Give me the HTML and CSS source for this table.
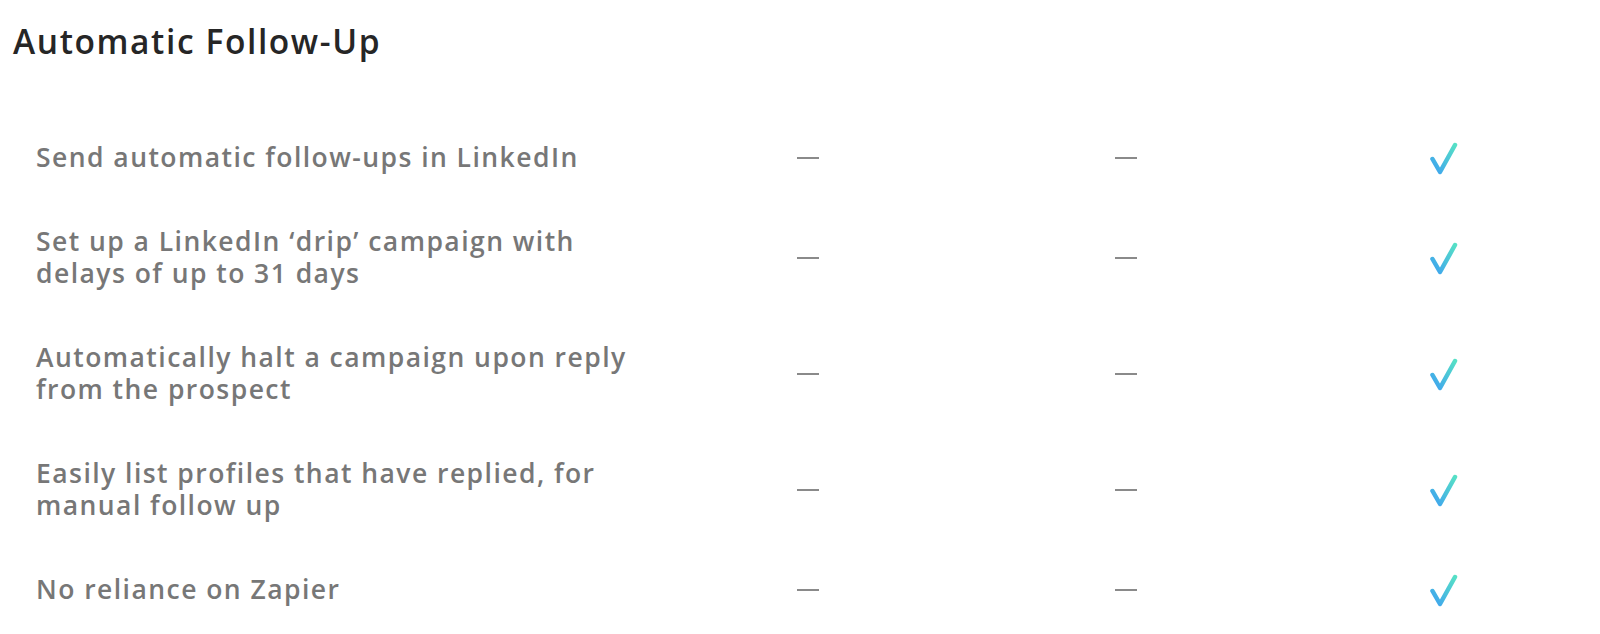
FILE: index.html
```html
<!DOCTYPE html>
<html lang="en">
<head>
<meta charset="utf-8">
<title>Automatic Follow-Up</title>
<link rel="stylesheet" href="styles.css">
</head>
<body>
<svg class="defs" width="0" height="0" aria-hidden="true">
  <defs>
    <linearGradient id="tick-grad" x1="0" y1="1" x2="1" y2="0">
      <stop offset="0" stop-color="#3ea2f0"/>
      <stop offset="1" stop-color="#56e0c6"/>
    </linearGradient>
  </defs>
</svg>
<section class="compare">
  <h1 class="title">Automatic Follow-Up</h1>
  <div class="table">
    <div class="row">
      <div class="feature">Send automatic follow-ups in LinkedIn</div>
      <div class="cell"><span class="dash"></span></div>
      <div class="cell"><span class="dash"></span></div>
      <div class="cell"><svg class="tick" viewBox="0 0 30 34"><path d="M3.5 18 L11 31 L26 4" fill="none" stroke="url(#tick-grad)" stroke-width="4.5" stroke-linecap="round" stroke-linejoin="round"/></svg></div>
    </div>
    <div class="row">
      <div class="feature">Set up a LinkedIn ‘drip’ campaign with delays of up to 31 days</div>
      <div class="cell"><span class="dash"></span></div>
      <div class="cell"><span class="dash"></span></div>
      <div class="cell"><svg class="tick" viewBox="0 0 30 34"><path d="M3.5 18 L11 31 L26 4" fill="none" stroke="url(#tick-grad)" stroke-width="4.5" stroke-linecap="round" stroke-linejoin="round"/></svg></div>
    </div>
    <div class="row">
      <div class="feature">Automatically halt a campaign upon reply from the prospect</div>
      <div class="cell"><span class="dash"></span></div>
      <div class="cell"><span class="dash"></span></div>
      <div class="cell"><svg class="tick" viewBox="0 0 30 34"><path d="M3.5 18 L11 31 L26 4" fill="none" stroke="url(#tick-grad)" stroke-width="4.5" stroke-linecap="round" stroke-linejoin="round"/></svg></div>
    </div>
    <div class="row">
      <div class="feature">Easily list profiles that have replied, for manual follow up</div>
      <div class="cell"><span class="dash"></span></div>
      <div class="cell"><span class="dash"></span></div>
      <div class="cell"><svg class="tick" viewBox="0 0 30 34"><path d="M3.5 18 L11 31 L26 4" fill="none" stroke="url(#tick-grad)" stroke-width="4.5" stroke-linecap="round" stroke-linejoin="round"/></svg></div>
    </div>
    <div class="row">
      <div class="feature">No reliance on Zapier</div>
      <div class="cell"><span class="dash"></span></div>
      <div class="cell"><span class="dash"></span></div>
      <div class="cell"><svg class="tick" viewBox="0 0 30 34"><path d="M3.5 18 L11 31 L26 4" fill="none" stroke="url(#tick-grad)" stroke-width="4.5" stroke-linecap="round" stroke-linejoin="round"/></svg></div>
    </div>
  </div>
</section>
</body>
</html>
```

FILE: styles.css
```css
html, body {
  margin: 0;
  padding: 0;
  background: #ffffff;
  overflow: hidden;
}

.defs {
  position: absolute;
  width: 0;
  height: 0;
}

.compare {
  width: 1600px;
  padding-left: 13px;
  box-sizing: border-box;
  font-family: "Open Sans", Lato, "DejaVu Sans", sans-serif;
}

.title {
  margin: 0;
  padding-top: 21px;
  font-size: 33.5px;
  line-height: 40px;
  font-weight: 600;
  color: #262626;
  letter-spacing: 1.6px;
}

.table {
  margin-top: 52px;
  padding-left: 23px;
}

.row {
  display: grid;
  grid-template-columns: 613px 318px 318px 318px;
  align-items: center;
  padding: 25px 0 24px;
}

.feature {
  max-width: 610px;
  padding-top: 3px;
  font-size: 26.5px;
  line-height: 32px;
  font-weight: 600;
  color: #777777;
  letter-spacing: 1.45px;
}

.cell {
  display: flex;
  justify-content: center;
  align-items: center;
  height: 32px;
  padding-top: 5px;
  box-sizing: border-box;
}

.dash {
  display: block;
  flex: none;
  width: 22px;
  height: 2px;
  background: #8a8a8a;
}

.tick {
  display: block;
  flex: none;
  width: 30px;
  height: 34px;
}
```
